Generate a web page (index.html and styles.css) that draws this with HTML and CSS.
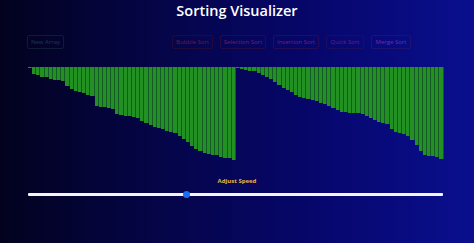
FILE: index.html
```html
<!DOCTYPE html>
<html>
<head>
<meta charset="utf-8">
<link rel="stylesheet" href="styles.css">
</head>
<body>
<div class="app">
  <h1 class="title">Sorting Visualizer</h1>
  <div class="toolbar">
    <button class="btn btn-new">New Array</button>
    <div class="sorts">
      <button class="btn btn-bubble">Bubble Sort</button>
      <button class="btn btn-selection">Selection Sort</button>
      <button class="btn btn-insertion">Insertion Sort</button>
      <button class="btn btn-quick">Quick Sort</button>
      <button class="btn btn-merge">Merge Sort</button>
    </div>
  </div>
  <div class="bars">
    <div class="bar" style="height:1px"></div>
    <div class="bar" style="height:7px"></div>
    <div class="bar" style="height:8px"></div>
    <div class="bar" style="height:10px"></div>
    <div class="bar" style="height:10px"></div>
    <div class="bar" style="height:12px"></div>
    <div class="bar" style="height:13px"></div>
    <div class="bar" style="height:13px"></div>
    <div class="bar" style="height:14px"></div>
    <div class="bar" style="height:19px"></div>
    <div class="bar" style="height:22px"></div>
    <div class="bar" style="height:24px"></div>
    <div class="bar" style="height:25px"></div>
    <div class="bar" style="height:26px"></div>
    <div class="bar" style="height:28px"></div>
    <div class="bar" style="height:29px"></div>
    <div class="bar" style="height:39px"></div>
    <div class="bar" style="height:40px"></div>
    <div class="bar" style="height:40px"></div>
    <div class="bar" style="height:41px"></div>
    <div class="bar" style="height:42px"></div>
    <div class="bar" style="height:47px"></div>
    <div class="bar" style="height:48px"></div>
    <div class="bar" style="height:49px"></div>
    <div class="bar" style="height:49px"></div>
    <div class="bar" style="height:50px"></div>
    <div class="bar" style="height:51px"></div>
    <div class="bar" style="height:54px"></div>
    <div class="bar" style="height:56px"></div>
    <div class="bar" style="height:58px"></div>
    <div class="bar" style="height:60px"></div>
    <div class="bar" style="height:61px"></div>
    <div class="bar" style="height:62px"></div>
    <div class="bar" style="height:64px"></div>
    <div class="bar" style="height:65px"></div>
    <div class="bar" style="height:66px"></div>
    <div class="bar" style="height:69px"></div>
    <div class="bar" style="height:72px"></div>
    <div class="bar" style="height:75px"></div>
    <div class="bar" style="height:79px"></div>
    <div class="bar" style="height:82px"></div>
    <div class="bar" style="height:84px"></div>
    <div class="bar" style="height:86px"></div>
    <div class="bar" style="height:87px"></div>
    <div class="bar" style="height:88px"></div>
    <div class="bar" style="height:88px"></div>
    <div class="bar" style="height:90px"></div>
    <div class="bar" style="height:91px"></div>
    <div class="bar" style="height:91px"></div>
    <div class="bar" style="height:93px"></div>
    <div class="bar" style="height:1px"></div>
    <div class="bar" style="height:2px"></div>
    <div class="bar" style="height:3px"></div>
    <div class="bar" style="height:4px"></div>
    <div class="bar" style="height:4px"></div>
    <div class="bar" style="height:6px"></div>
    <div class="bar" style="height:8px"></div>
    <div class="bar" style="height:10px"></div>
    <div class="bar" style="height:12px"></div>
    <div class="bar" style="height:15px"></div>
    <div class="bar" style="height:18px"></div>
    <div class="bar" style="height:21px"></div>
    <div class="bar" style="height:23px"></div>
    <div class="bar" style="height:25px"></div>
    <div class="bar" style="height:28px"></div>
    <div class="bar" style="height:30px"></div>
    <div class="bar" style="height:31px"></div>
    <div class="bar" style="height:32px"></div>
    <div class="bar" style="height:33px"></div>
    <div class="bar" style="height:34px"></div>
    <div class="bar" style="height:36px"></div>
    <div class="bar" style="height:37px"></div>
    <div class="bar" style="height:39px"></div>
    <div class="bar" style="height:41px"></div>
    <div class="bar" style="height:43px"></div>
    <div class="bar" style="height:45px"></div>
    <div class="bar" style="height:45px"></div>
    <div class="bar" style="height:46px"></div>
    <div class="bar" style="height:46px"></div>
    <div class="bar" style="height:46px"></div>
    <div class="bar" style="height:47px"></div>
    <div class="bar" style="height:49px"></div>
    <div class="bar" style="height:51px"></div>
    <div class="bar" style="height:53px"></div>
    <div class="bar" style="height:55px"></div>
    <div class="bar" style="height:56px"></div>
    <div class="bar" style="height:57px"></div>
    <div class="bar" style="height:62px"></div>
    <div class="bar" style="height:65px"></div>
    <div class="bar" style="height:66px"></div>
    <div class="bar" style="height:67px"></div>
    <div class="bar" style="height:69px"></div>
    <div class="bar" style="height:73px"></div>
    <div class="bar" style="height:78px"></div>
    <div class="bar" style="height:84px"></div>
    <div class="bar" style="height:88px"></div>
    <div class="bar" style="height:89px"></div>
    <div class="bar" style="height:89px"></div>
    <div class="bar" style="height:90px"></div>
    <div class="bar" style="height:92px"></div>
  </div>
  <div class="speed">
    <label class="speed-label" for="speed">Adjust Speed</label>
    <input class="slider" id="speed" type="range" min="0" max="100" value="38">
  </div>
</div>
</body>
</html>
```

FILE: styles.css
```css
html, body {
  margin: 0;
  padding: 0;
  height: 100%;
}
body {
  background: linear-gradient(to right, #02021f 0%, #05054a 35%, #06066a 65%, #0a0f8e 100%);
  font-family: "Open Sans", "Noto Sans", sans-serif;
  overflow: hidden;
}
.app {
  display: flex;
  flex-direction: column;
  height: 243px;
}
.title {
  margin: 0;
  padding-top: 1px;
  height: 22px;
  text-align: center;
  color: #ffffff;
  font-size: 14.5px;
  font-weight: 600;
  line-height: 20px;
}
.toolbar {
  display: flex;
  align-items: center;
  margin-top: 12px;
  padding-left: 27px;
  height: 14px;
}
.sorts {
  display: flex;
  gap: 7px;
  margin-left: 108px;
}
.btn {
  box-sizing: border-box;
  height: 14px;
  padding: 0;
  background: transparent;
  border: 1px solid;
  border-radius: 2px;
  font-family: "Open Sans", "Noto Sans", sans-serif;
  font-size: 6px;
  line-height: 12px;
  white-space: nowrap;
  text-align: center;
}
.btn-new { width: 37px; color: #1f3b52; border-color: #0e1c38; }
.btn-bubble { width: 41px; color: #741844; border-color: #22093a; }
.btn-selection { width: 46px; color: #7c1d70; border-color: #240b48; }
.btn-insertion { width: 46px; color: #761e82; border-color: #260c52; }
.btn-quick { width: 38px; color: #622396; border-color: #1c0e5e; }
.btn-merge { width: 40px; color: #702cae; border-color: #1e1270; }
.bars {
  display: flex;
  align-items: flex-start;
  width: 415px;
  margin-top: 18px;
  margin-left: 28px;
  height: 94px;
}
.bar {
  flex: 1 1 0;
  background: #229022;
  border-right: 1px solid #135a26;
}
.speed {
  display: flex;
  flex-direction: column;
  align-items: center;
  margin-top: 16px;
}
.speed-label {
  color: #e8b43a;
  font-size: 6px;
  font-weight: 700;
  line-height: 8px;
}
.slider {
  -webkit-appearance: none;
  appearance: none;
  width: 415px;
  height: 3px;
  margin: 8px 3px 0 0;
  background: #f4f4f8;
  border-radius: 1px;
  outline: none;
}
.slider::-webkit-slider-thumb {
  -webkit-appearance: none;
  appearance: none;
  width: 7px;
  height: 7px;
  border-radius: 50%;
  background: #1a6ff0;
}
```
